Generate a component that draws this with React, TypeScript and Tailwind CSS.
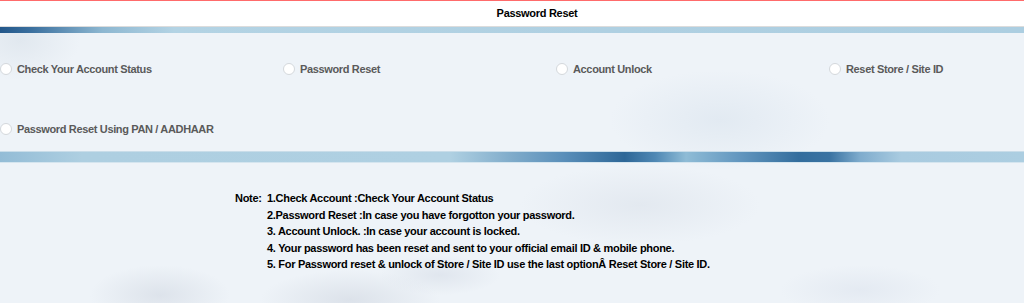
import React from 'react';

const options = [
  'Check Your Account Status',
  'Password Reset',
  'Account Unlock',
  'Reset Store / Site ID',
  'Password Reset Using PAN / AADHAAR',
];

const notes = [
  '1.Check Account :Check Your Account Status',
  '2.Password Reset :In case you have forgotton your password.',
  '3. Account Unlock. :In case your account is locked.',
  '4. Your password has been reset and sent to your official email ID & mobile phone.',
  '5. For Password reset & unlock of Store / Site ID use the last optionÂ Reset Store / Site ID.',
];

const Radio: React.FC<{ label: string }> = ({ label }) => (
  <label className="flex items-center gap-[5px] cursor-pointer">
    <span className="w-[12px] h-[12px] rounded-full bg-white border border-[#d4d8dc] shrink-0" />
    <span className="text-[11px] font-bold tracking-[-0.35px] text-[#5a5a5a] whitespace-nowrap">{label}</span>
  </label>
);

const App: React.FC = () => {
  return (
    <div
      className="w-[1024px] h-[303px] overflow-hidden bg-[#eef3f8] bg-[radial-gradient(ellipse_60px_40px_at_20px_40px,#e1e8ef,transparent),radial-gradient(ellipse_110px_50px_at_720px_120px,#e2eaf2,transparent),radial-gradient(ellipse_70px_30px_at_160px_295px,#dde3eb,transparent),radial-gradient(ellipse_90px_30px_at_350px_300px,#dce2ea,transparent),radial-gradient(ellipse_60px_20px_at_440px_275px,#e0e6ee,transparent),radial-gradient(ellipse_120px_40px_at_640px_205px,#e3e9f0,transparent),radial-gradient(ellipse_80px_25px_at_860px_290px,#e4eaf2,transparent)]"
      style={{ fontFamily: '"Liberation Sans", Arial, sans-serif' }}
    >
      {/* header */}
      <div className="h-[27px] pl-[50px] bg-white border-t border-[#ff6b6b] border-b border-b-[#dcdcdc] flex items-center justify-center">
        <h1 className="text-[11px] font-bold tracking-[-0.3px] text-black">Password Reset</h1>
      </div>

      {/* top band */}
      <div className="h-[6px] bg-[linear-gradient(to_right,#23578a_0%,#3a6f9e_3%,#8db7d1_10%,#b3d3e4_17%,#afd0e2_60%,#acceE1_100%)]" />

      {/* options */}
      <div className="h-[118px] pt-[28px]">
        <div className="grid grid-cols-[283px_273px_273px_1fr] gap-y-[43px]">
          {options.map((o) => (
            <Radio key={o} label={o} />
          ))}
        </div>
      </div>

      {/* middle band */}
      <div className="h-[12px] border-t border-[#c9dde9] border-b border-b-[#d5e5ef] bg-[linear-gradient(to_right,#93bcd6_0%,#aecfe1_8%,#afd0e2_44%,#7fabca_50%,#5a8fba_55%,#2e6797_61%,#4f88b4_64%,#8fbcd6_67%,#6498c0_72%,#336d9d_78%,#3a73a2_81%,#7faccd_84%,#a9cbe0_88%,#acceE1_100%)]" />

      {/* notes */}
      <div className="pt-[27px] pl-[235px] flex text-[11px] font-bold tracking-[-0.3px] text-black leading-[16.6px]">
        <span className="w-[32px] shrink-0">Note:</span>
        <ul>
          {notes.map((n) => (
            <li key={n} className="whitespace-nowrap">{n}</li>
          ))}
        </ul>
      </div>
    </div>
  );
};

export default App;
